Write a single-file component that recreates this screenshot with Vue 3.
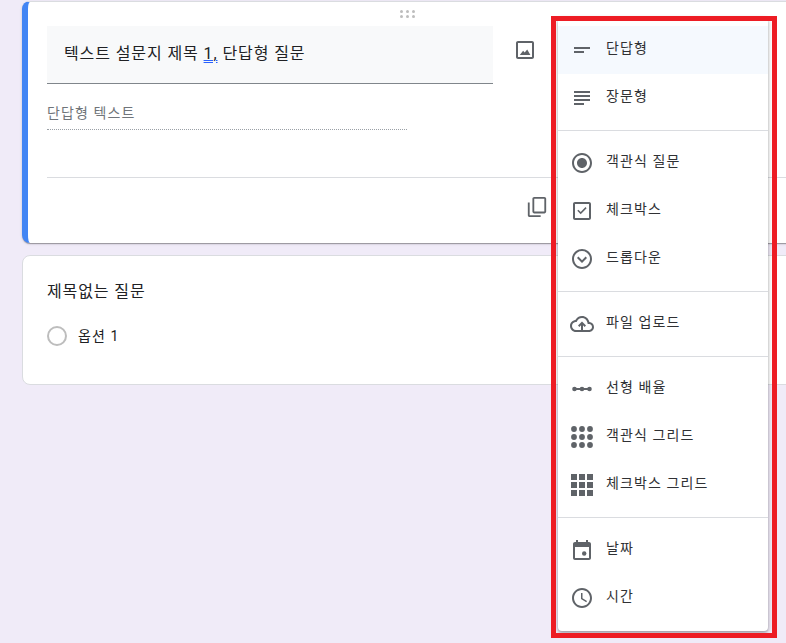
<script setup>
const groups = [
  [
    { label: '단답형', icon: 'short', active: true },
    { label: '장문형', icon: 'long' }
  ],
  [
    { label: '객관식 질문', icon: 'radio' },
    { label: '체크박스', icon: 'check' },
    { label: '드롭다운', icon: 'drop' }
  ],
  [{ label: '파일 업로드', icon: 'upload' }],
  [
    { label: '선형 배율', icon: 'scale' },
    { label: '객관식 그리드', icon: 'dots' },
    { label: '체크박스 그리드', icon: 'squares' }
  ],
  [
    { label: '날짜', icon: 'date' },
    { label: '시간', icon: 'time' }
  ]
]
const gridPos = [0, 1, 2]
</script>

<template>
  <div class="page">
    <section class="card active-card">
      <div class="drag">
        <i v-for="n in 6" :key="n"></i>
      </div>
      <div class="title-row">
        <div class="title-field">텍스트 설문지 제목 <span class="misspelt">1,</span> 단답형 질문</div>
        <svg class="image-icon" viewBox="0 0 24 24" width="24" height="24">
          <path d="M19 5v14H5V5h14m0-2H5c-1.1 0-2 .9-2 2v14c0 1.1.9 2 2 2h14c1.1 0 2-.9 2-2V5c0-1.1-.9-2-2-2z" />
          <path d="M14.2 11.5l-2.5 3-1.6-1.8L6.8 17h10.6z" />
        </svg>
      </div>
      <div class="answer">단답형 텍스트</div>
      <div class="footer">
        <svg class="copy-icon" viewBox="0 0 24 24" width="22" height="22">
          <path d="M16 23H4c-1.1 0-2-.9-2-2V7h2v14h12v2zM20 1H9c-1.1 0-2 .9-2 2v14c0 1.1.9 2 2 2h11c1.1 0 2-.9 2-2V3c0-1.1-.9-2-2-2zm0 16H9V3h11v14z" />
        </svg>
      </div>
    </section>

    <section class="card plain-card">
      <div class="plain-title">제목없는 질문</div>
      <div class="option">
        <span class="radio"></span>
        <span>옵션 1</span>
      </div>
    </section>

    <div class="menu">
      <template v-for="(group, g) in groups" :key="g">
        <div v-if="g > 0" class="divider"></div>
        <div v-for="item in group" :key="item.label" class="item" :class="{ on: item.active }">
          <svg class="icon" viewBox="0 0 24 24" width="24" height="24">
            <path v-if="item.icon === 'short'" d="M4 9h16v2H4zm0 4h10v2H4z" />
            <path v-else-if="item.icon === 'long'" d="M14 17H4v2h10v-2zm6-8H4v2h16V9zM4 15h16v-2H4v2zM4 5v2h16V5H4z" />
            <path v-else-if="item.icon === 'radio'" d="M12 7c-2.76 0-5 2.24-5 5s2.24 5 5 5 5-2.24 5-5-2.24-5-5-5zm0-5C6.48 2 2 6.48 2 12s4.48 10 10 10 10-4.48 10-10S17.52 2 12 2zm0 18c-4.42 0-8-3.58-8-8s3.58-8 8-8 8 3.58 8 8-3.58 8-8 8z" />
            <template v-else-if="item.icon === 'check'">
              <path d="M19 3H5c-1.1 0-2 .9-2 2v14c0 1.1.9 2 2 2h14c1.1 0 2-.9 2-2V5c0-1.1-.9-2-2-2zm0 16H5V5h14v14z" />
              <path d="M16.6 9.2l-1.1-1.1-4.8 4.9-2.3-2.3-1.1 1.1 3.4 3.4z" />
            </template>
            <path v-else-if="item.icon === 'drop'" d="M12 2C6.48 2 2 6.48 2 12s4.48 10 10 10 10-4.48 10-10S17.52 2 12 2zm0 18c-4.42 0-8-3.58-8-8s3.58-8 8-8 8 3.58 8 8-3.58 8-8 8zM8.4 9.6L7 11l5 5 5-5-1.4-1.4-3.6 3.6z" />
            <path v-else-if="item.icon === 'upload'" d="M19.35 10.04C18.67 6.59 15.64 4 12 4 9.11 4 6.6 5.64 5.35 8.04 2.34 8.36 0 10.91 0 14c0 3.31 2.69 6 6 6h5v-2H6c-2.21 0-4-1.79-4-4 0-2.05 1.53-3.76 3.56-3.97l1.07-.11.5-.95C8.08 7.14 9.94 6 12 6c2.62 0 4.88 1.86 5.39 4.43l.3 1.5 1.53.11c1.56.1 2.78 1.41 2.78 2.96 0 1.65-1.35 3-3 3h-6v2h6c2.76 0 5-2.24 5-5 0-2.64-2.05-4.78-4.65-4.96zM8 13.5l1.4 1.4 1.6-1.6V20h2v-6.7l1.6 1.6 1.4-1.4-4-4z" />
            <template v-else-if="item.icon === 'scale'">
              <circle cx="4.5" cy="12" r="2.3" /><circle cx="12" cy="12" r="2.3" /><circle cx="19.5" cy="12" r="2.3" />
              <path d="M4.5 11h15v2h-15z" />
            </template>
            <template v-else-if="item.icon === 'dots'">
              <template v-for="r in gridPos" :key="r">
                <circle v-for="c in gridPos" :key="c" :cx="4 + c * 8" :cy="4 + r * 8" r="2.9" />
              </template>
            </template>
            <template v-else-if="item.icon === 'squares'">
              <template v-for="r in gridPos" :key="r">
                <rect v-for="c in gridPos" :key="c" :x="1 + c * 8" :y="1 + r * 8" width="6" height="6" />
              </template>
            </template>
            <template v-else-if="item.icon === 'date'">
              <path d="M19 4h-1V2h-2v2H8V2H6v2H5c-1.1 0-2 .9-2 2v14c0 1.1.9 2 2 2h14c1.1 0 2-.9 2-2V6c0-1.1-.9-2-2-2zm0 16H5V9h14v11z" />
              <circle cx="14.2" cy="15.5" r="2.2" />
            </template>
            <path v-else-if="item.icon === 'time'" d="M11.99 2C6.47 2 2 6.48 2 12s4.47 10 9.99 10C17.52 22 22 17.52 22 12S17.52 2 11.99 2zM12 20c-4.42 0-8-3.58-8-8s3.58-8 8-8 8 3.58 8 8-3.58 8-8 8zM12.5 7H11v6l5.25 3.15.75-1.23-4.5-2.67z" />
          </svg>
          <span class="label">{{ item.label }}</span>
        </div>
      </template>
    </div>

    <div class="highlight"></div>
  </div>
</template>

<style>
html, body { margin: 0; overflow: hidden; }
</style>

<style scoped>
.page {
  position: relative;
  width: 786px;
  height: 643px;
  overflow: hidden;
  background: #f0ebf8;
  box-sizing: border-box;
  padding: 1px 0 0 22px;
  font-family: Roboto, "Noto Sans CJK KR", sans-serif;
  color: #202124;
}
.card {
  box-sizing: border-box;
  width: 800px;
  background: #fff;
  border-radius: 8px;
}
.active-card {
  position: relative;
  height: 242px;
  padding: 24px 0 0 19px;
  border-left: 6px solid #4285f4;
  border-top: 1px solid #dadce0;
  box-shadow: 0 2px 1px -1px rgba(0,0,0,.2), 0 1px 1px 0 rgba(0,0,0,.14), 0 1px 3px 0 rgba(0,0,0,.12);
}
.drag {
  position: absolute;
  left: 372px;
  top: 8px;
  display: grid;
  grid-template-columns: repeat(3, 3px);
  gap: 2px 3px;
}
.drag i {
  width: 3px;
  height: 3px;
  border-radius: 50%;
  background: #bdbdbd;
}
.title-row {
  display: flex;
  align-items: flex-start;
}
.title-field {
  box-sizing: border-box;
  width: 446px;
  height: 58px;
  padding: 17px 17px 0;
  background: #f8f9fa;
  border-bottom: 1px solid #80868b;
  font-size: 16px;
  line-height: 22px;
  letter-spacing: .9px;
}
.misspelt {
  text-decoration: underline double #2962ff;
  text-decoration-thickness: 1px;
  text-underline-offset: 1px;
}
.image-icon {
  margin: 12px 0 0 20px;
  fill: #5f6368;
}
.answer {
  box-sizing: border-box;
  width: 360px;
  height: 30px;
  margin-top: 16px;
  border-bottom: 1px dotted #9aa0a6;
  font-size: 14px;
  line-height: 26px;
  letter-spacing: 1.1px;
  color: #70757a;
}
.footer {
  margin-top: 47px;
  height: 65px;
  border-top: 1px solid #dadce0;
  padding: 18px 0 0 479px;
}
.copy-icon {
  display: block;
  fill: #5f6368;
}
.plain-card {
  height: 130px;
  margin-top: 12px;
  padding: 24px 24px 0;
  border: 1px solid #dadce0;
}
.plain-title {
  font-size: 16px;
  line-height: 24px;
  letter-spacing: .9px;
}
.option {
  display: flex;
  align-items: center;
  gap: 11px;
  margin-top: 22px;
  font-size: 14px;
  line-height: 20px;
  letter-spacing: 1.1px;
}
.radio {
  box-sizing: border-box;
  width: 20px;
  height: 20px;
  border: 2px solid #bdbdbd;
  border-radius: 50%;
}
.menu {
  position: absolute;
  left: 558px;
  top: 18px;
  box-sizing: border-box;
  width: 210px;
  height: 613px;
  padding: 8px 0;
  background: #fff;
  border-radius: 4px;
  box-shadow: 0 2px 2px 0 rgba(0,0,0,.14), 0 1px 5px 0 rgba(0,0,0,.3);
}
.item {
  display: flex;
  align-items: center;
  gap: 12px;
  height: 48px;
  padding-left: 12px;
}
.item.on {
  background: #f5f9fe;
}
.icon {
  flex: none;
  fill: #5f6368;
}
.label {
  font-size: 14px;
  line-height: 20px;
  letter-spacing: 1.1px;
  margin-top: -5px;
  color: #303134;
}
.divider {
  height: 1px;
  margin: 8px 0;
  background: #dadce0;
}
.highlight {
  position: absolute;
  left: 551px;
  top: 16px;
  box-sizing: border-box;
  width: 226px;
  height: 622px;
  border: 5px solid #ed1c24;
  pointer-events: none;
}
</style>
